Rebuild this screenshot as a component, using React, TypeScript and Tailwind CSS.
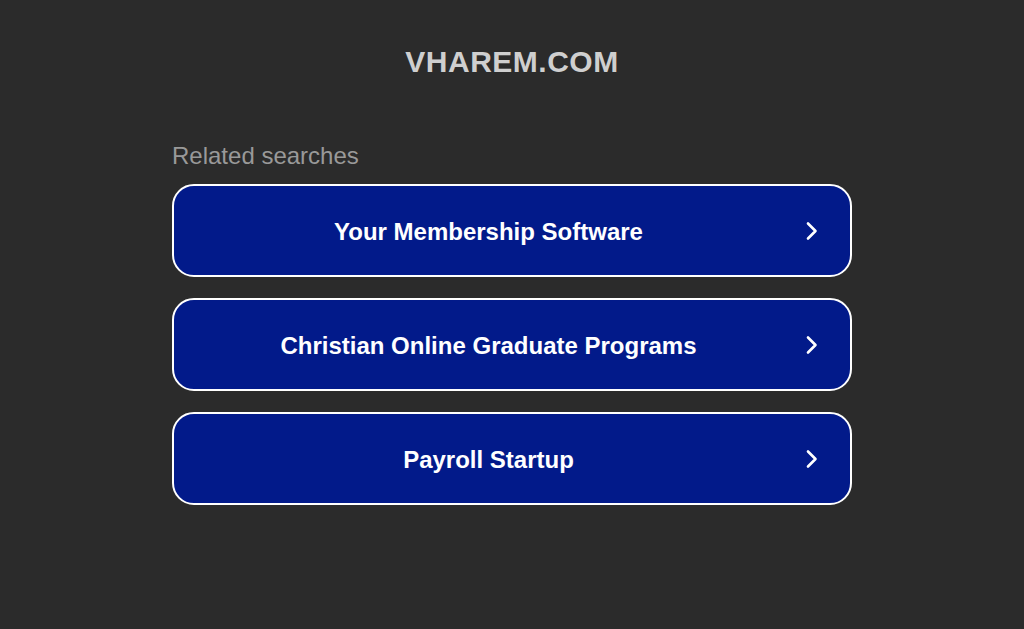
import React from "react";

const searches = [
	{ id: "1", label: "Your Membership Software" },
	{ id: "2", label: "Christian Online Graduate Programs" },
	{ id: "3", label: "Payroll Startup" },
];

const Chevron = () => (
	<svg width="14" height="20" viewBox="0 0 14 20" fill="none" className="mr-[31px]">
		<path d="M3 2.5 L10.5 10 L3 17.5" stroke="white" strokeWidth="2.6" strokeLinecap="round" strokeLinejoin="round" />
	</svg>
);

export default function App() {
	return (
		<div
			className="min-h-[629px] w-full bg-[#2b2b2b] flex flex-col items-center"
			style={{ fontFamily: '"Liberation Sans", Arial, sans-serif' }}
		>
			<h1 className="mt-[45px] text-[30px] leading-[34px] font-bold tracking-[0.5px] text-[#cfcfcf]">
				VHAREM.COM
			</h1>
			<div className="w-[680px] mt-[63px]">
				<p className="text-[24px] leading-[28px] text-[#999999] mb-[14px]">Related searches</p>
				<div className="flex flex-col gap-[21px]">
					{searches.map((item) => (
						<a
							key={item.id}
							href="#"
							className="h-[93px] flex items-center rounded-[22px] border-2 border-white bg-[#021a8a] text-white"
						>
							<span className="flex-1 text-center text-[24px] leading-[28px] font-bold pr-[2px] pt-[2px]">{item.label}</span>
							<Chevron />
						</a>
					))}
				</div>
			</div>
		</div>
	);
}
